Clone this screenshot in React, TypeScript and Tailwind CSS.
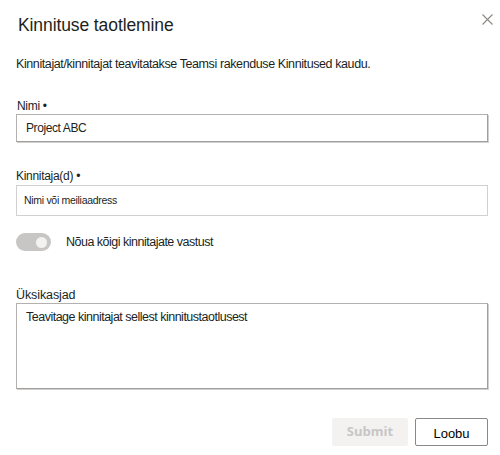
import React from "react";

const font = { fontFamily: '"Liberation Sans", Arial, sans-serif' };

export default function App() {
  return (
    <div className="w-[500px] h-[455px] bg-white text-[#201f1e] overflow-hidden" style={font}>
      <div className="flex items-start justify-between pl-[18px] pr-[7px] pt-[14px]">
        <h1 className="text-[17.5px] leading-[22px] tracking-[-0.1px] text-[#201f1e]">Kinnituse taotlemine</h1>
        <button className="w-[11px] h-[11px] mt-[0px] text-[#8a8886]" aria-label="Sulge">
          <svg viewBox="0 0 11 11" width="11" height="11" fill="none" stroke="currentColor" strokeWidth="1.1">
            <path d="M0.5 0.5 L10.5 10.5 M10.5 0.5 L0.5 10.5" />
          </svg>
        </button>
      </div>

      <div className="pl-[16px] pr-[12px]">
        <p className="mt-[20px] h-[16px] text-[12.5px] leading-[16px] tracking-[-0.4px]">
          Kinnitajat/kinnitajat teavitatakse Teamsi rakenduse Kinnitused kaudu.
        </p>

        <label className="block mt-[26px] h-[16px] text-[12px] leading-[16px] tracking-[-0.3px] pl-[1px]">Nimi •</label>
        <div className="h-[28px] border border-[#b3b0ad] border-r-[#a19f9d] border-b-[#a19f9d] shadow-[1px_1px_0_#d2d0ce] flex items-center pl-[9px] text-[12px] tracking-[-0.4px]">
          Project ABC
        </div>

        <label className="block mt-[26px] h-[16px] text-[12px] leading-[16px] tracking-[-0.3px]">Kinnitaja(d) •</label>
        <div className="mt-[1px] h-[31px] border border-[#d2d0ce] flex items-center pl-[7px] text-[10.5px] tracking-[-0.3px]">
          Nimi või meiliaadress
        </div>

        <div className="mt-[17px] h-[18px] flex items-center">
          <div className="w-[35px] h-[18px] rounded-full bg-[#c8c6c4] flex items-center justify-end pr-[4px]">
            <div className="w-[11px] h-[11px] rounded-full bg-[#f3f2f1]" />
          </div>
          <span className="ml-[15px] text-[12.5px] tracking-[-0.5px]">Nõua kõigi kinnitajate vastust</span>
        </div>

        <label className="block mt-[36px] h-[16px] text-[12.5px] leading-[16px] tracking-[-0.1px]">Üksikasjad</label>
        <div className="h-[86px] border border-[#b3b0ad] border-r-[#a19f9d] border-b-[#a19f9d] shadow-[1px_1px_0_#d2d0ce] pl-[9px] pt-[5px] text-[12.5px] leading-[16px] tracking-[-0.5px]">
          Teavitage kinnitajat sellest kinnitustaotlusest
        </div>

        <div className="mt-[29px] flex justify-end gap-[7px]">
          <button
            className="w-[76px] h-[28px] rounded-[2px] bg-[#f3f2f1] text-[#c8c6c4] text-[13px] font-bold"
            style={{ fontFamily: '"Open Sans", "Liberation Sans", sans-serif' }}
          >
            Submit
          </button>
          <button className="w-[73px] h-[28px] rounded-[2px] border border-[#8a8886] bg-white text-[13px] pt-[3px] text-black">
            Loobu
          </button>
        </div>
      </div>
    </div>
  );
}
